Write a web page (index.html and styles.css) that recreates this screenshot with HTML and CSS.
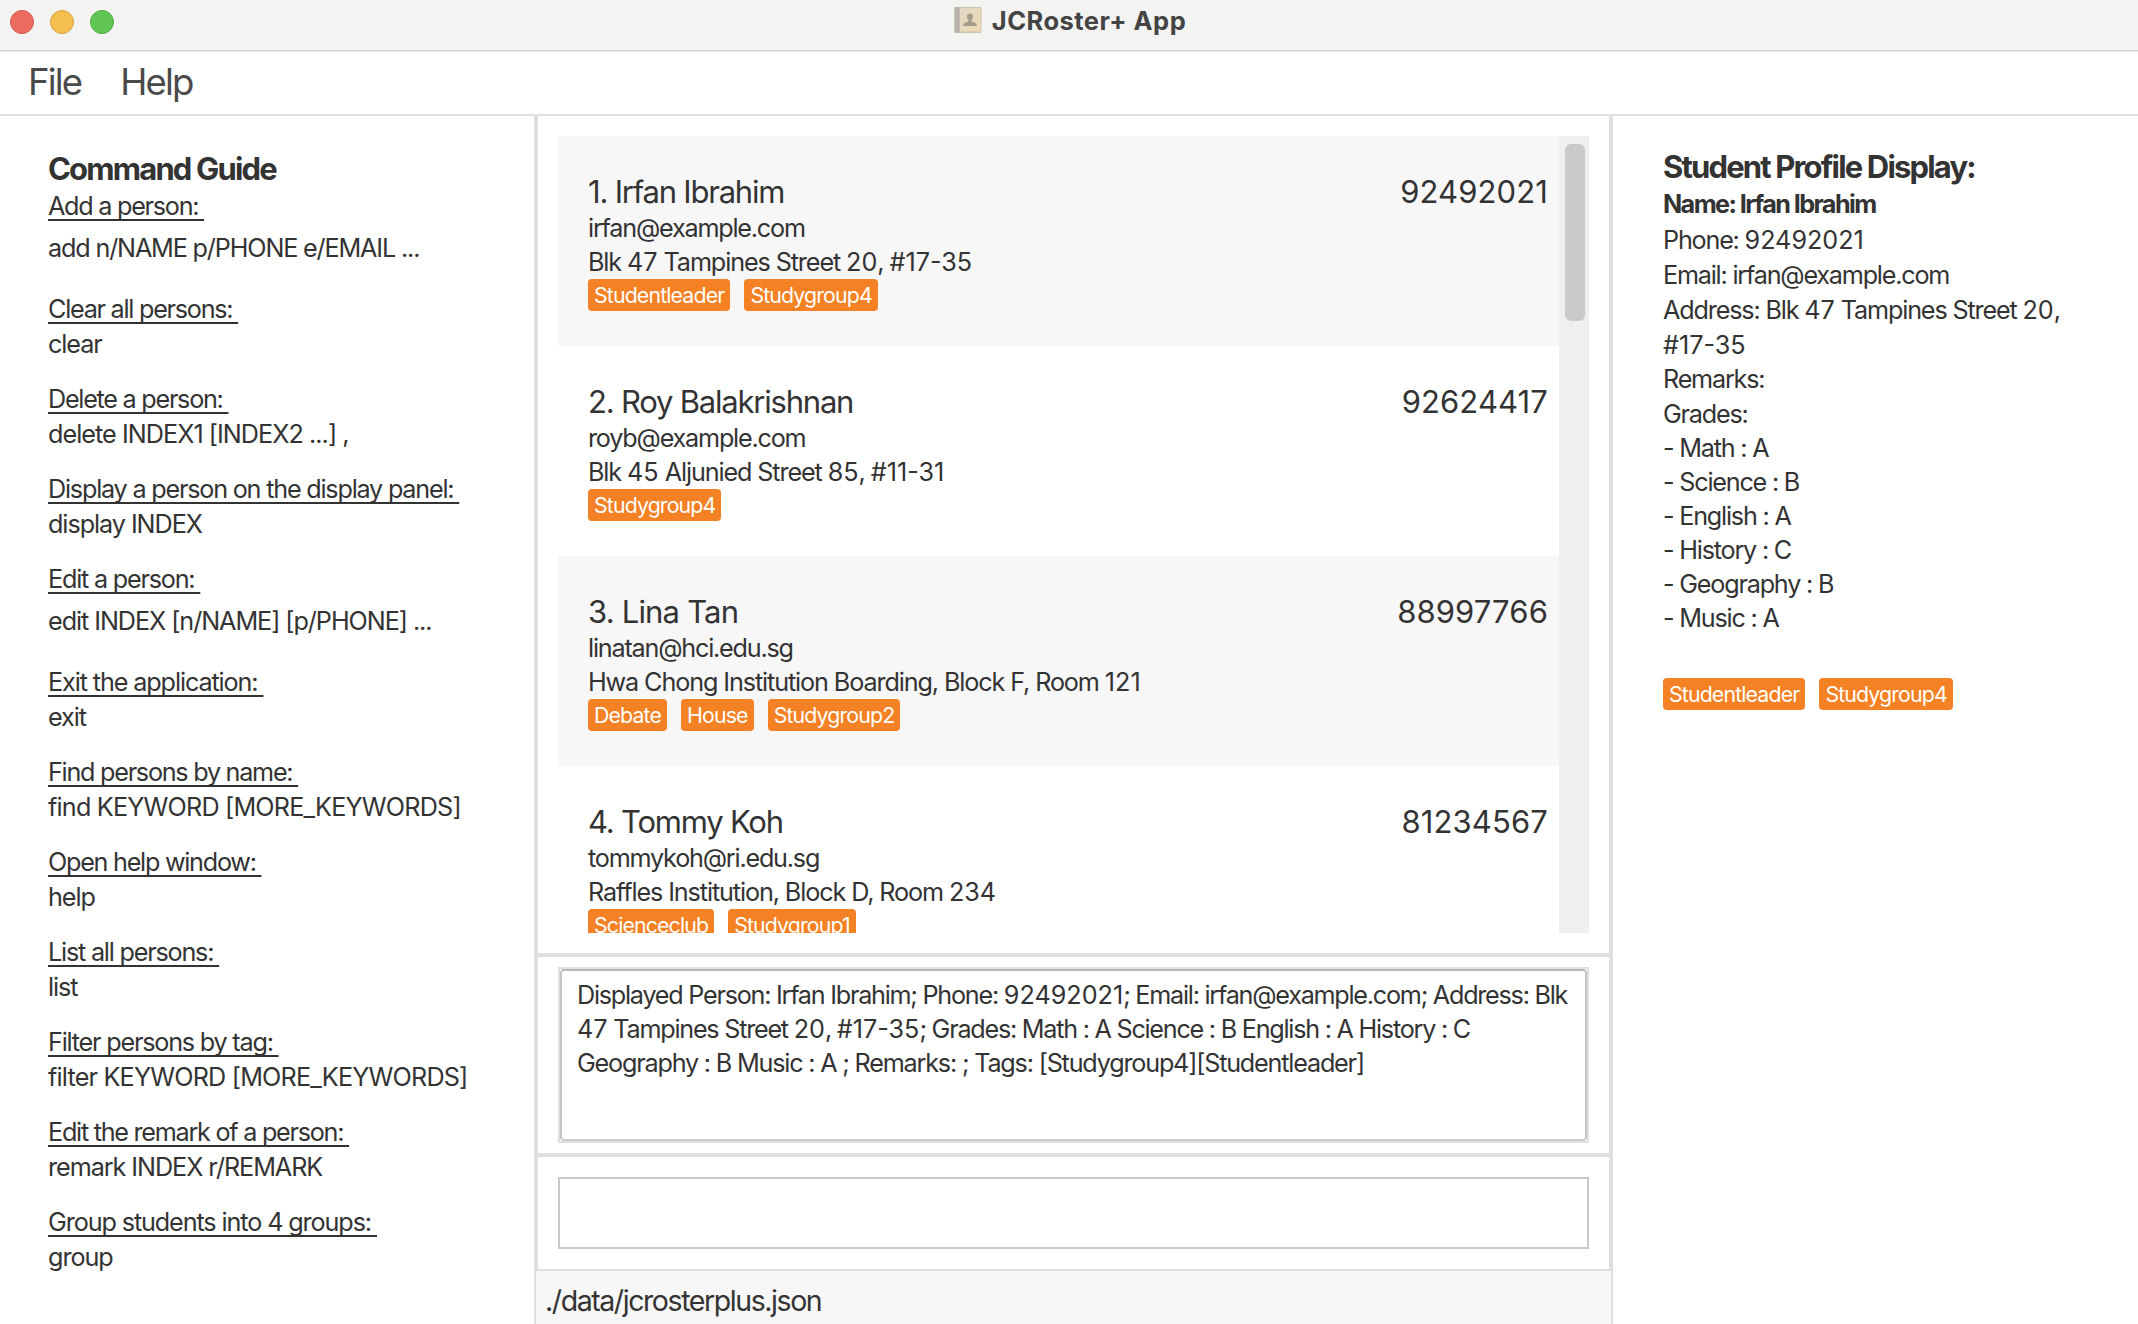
FILE: index.html
```html
<!DOCTYPE html>
<html lang="en">
<head>
<meta charset="utf-8">
<title>JCRoster+ App</title>
<link rel="stylesheet" href="styles.css">
</head>
<body>
<div class="window">
  <header class="titlebar">
    <div class="lights"><i class="light red"></i><i class="light yellow"></i><i class="light green"></i></div>
    <svg class="app-icon" width="28" height="28" viewBox="0 0 28 28">
      <defs><linearGradient id="cover" x1="0" y1="0" x2="1" y2="1"><stop offset="0" stop-color="#e0d6c4"/><stop offset="1" stop-color="#eedcb4"/></linearGradient></defs>
      <rect x="0.5" y="1" width="27" height="26" rx="1" fill="#cdc2ae"/>
      <rect x="0.5" y="1" width="5" height="25.5" rx="1" fill="#b9b2ac"/>
      <rect x="6" y="2" width="20.5" height="23.5" fill="url(#cover)"/>
      <circle cx="16" cy="10.6" r="3.1" fill="#a59c90"/>
      <path d="M14.4 12h3.200v3.200c1 1.200 5 1.200 5.300 3.900v.9H9.100v-.9c.3-2.700 4.300-2.700 5.300-3.900z" fill="#a59c90"/>
    </svg>
    <h1 class="app-title">JCRoster+ App</h1>
  </header>
  <nav class="menubar"><span>File</span><span>Help</span></nav>
  <main class="panes">
    <section class="guide">
      <h2>Command Guide</h2>
      <dl>
        <div class="roomy"><dt>Add a person:&nbsp;</dt><dd>add n/NAME p/PHONE e/EMAIL ...</dd></div>
        <div><dt>Clear all persons:&nbsp;</dt><dd>clear</dd></div>
        <div><dt>Delete a person:&nbsp;</dt><dd class="index">delete INDEX1 [INDEX2 ...] ,</dd></div>
        <div><dt class="long">Display a person on the display panel:&nbsp;</dt><dd>display INDEX</dd></div>
        <div class="roomy"><dt class="long">Edit a person:&nbsp;</dt><dd class="wide">edit INDEX [n/NAME] [p/PHONE] ...</dd></div>
        <div><dt class="wide">Exit the application:&nbsp;</dt><dd>exit</dd></div>
        <div><dt>Find persons by name:&nbsp;</dt><dd class="caps">find KEYWORD [MORE_KEYWORDS]</dd></div>
        <div><dt>Open help window:&nbsp;</dt><dd>help</dd></div>
        <div><dt class="long">List all persons:&nbsp;</dt><dd>list</dd></div>
        <div><dt class="long">Filter persons by tag:&nbsp;</dt><dd class="caps">filter KEYWORD [MORE_KEYWORDS]</dd></div>
        <div><dt>Edit the remark of a person:&nbsp;</dt><dd>remark INDEX r/REMARK</dd></div>
        <div><dt class="wide">Group students into 4 groups:&nbsp;</dt><dd>group</dd></div>
      </dl>
    </section>

    <section class="center">
      <div class="list-pane">
        <div class="list">
          <div class="cells">
            <article class="cell">
              <div class="cell-head"><h3>1. Irfan Ibrahim</h3><span class="phone">92492021</span></div>
              <p>irfan@example.com</p>
              <p class="address">Blk <b>47</b> Tampines Street <b>20</b>, <b>#17-35</b></p>
              <div class="tags"><span>Studentleader</span><span>Studygroup4</span></div>
            </article>
            <article class="cell">
              <div class="cell-head"><h3>2. Roy Balakrishnan</h3><span class="phone">92624417</span></div>
              <p>royb@example.com</p>
              <p class="address">Blk <b>45</b> Aljunied Street <b>85</b>, <b>#11-31</b></p>
              <div class="tags"><span>Studygroup4</span></div>
            </article>
            <article class="cell">
              <div class="cell-head"><h3 class="short">3. Lina Tan</h3><span class="phone">88997766</span></div>
              <p>linatan@hci.edu.sg</p>
              <p class="address">Hwa Chong Institution Boarding, Block F, Room <b>121</b></p>
              <div class="tags"><span>Debate</span><span>House</span><span>Studygroup2</span></div>
            </article>
            <article class="cell">
              <div class="cell-head"><h3>4. Tommy Koh</h3><span class="phone">81234567</span></div>
              <p>tommykoh@ri.edu.sg</p>
              <p class="address">Raffles Institution, Block D, Room <b>234</b></p>
              <div class="tags"><span>Scienceclub</span><span>Studygroup1</span></div>
            </article>
          </div>
          <div class="scrollbar"><div class="thumb"></div></div>
        </div>
      </div>
      <div class="result-pane">
        <div class="result"><div class="result-text">Displayed Person: Irfan Ibrahim; Phone: <b>92492021</b>; Email: irfan@example.com; Address: Blk<br><b>47</b> Tampines Street <b>20</b>, <b>#17-35</b>; Grades: Math : A Science : B English : A History : C<br><span class="last-line">Geography : B Music : A ; Remarks: ; Tags: [Studygroup4][Studentleader]</span></div></div>
      </div>
      <div class="command-pane"><div class="command-box"></div></div>
      <footer class="status">./data/jcrosterplus.json</footer>
    </section>

    <section class="profile">
      <h2>Student Profile Display:</h2>
      <p class="name">Name: Irfan Ibrahim</p>
      <p>Phone: <b>92492021</b></p>
      <p>Email: irfan@example.com</p>
      <p class="address">Address: Blk <b>47</b> Tampines Street <b>20</b>,<br><b>#17-35</b></p>
      <p>Remarks:</p>
      <p>Grades:</p>
      <ul>
        <li>- Math : A</li>
        <li>- Science : B</li>
        <li>- English : A</li>
        <li>- History : C</li>
        <li>- Geography : B</li>
        <li>- Music : A</li>
      </ul>
      <div class="tags"><span>Studentleader</span><span>Studygroup4</span></div>
    </section>
  </main>
</div>
</body>
</html>
```
FILE: styles.css
```css
* { box-sizing: border-box; margin: 0; padding: 0; }

body {
  background: #fff;
  color: #333;
  font: 25.2px/34px Inter, "Liberation Sans", sans-serif;
  letter-spacing: -0.048em;
  white-space: nowrap;
}

/* figures keep their natural width */
b { font-weight: 400; letter-spacing: 0; }

.window { display: flex; flex-direction: column; width: 2138px; height: 1324px; overflow: hidden; }

/* title bar */
.titlebar {
  position: relative;
  display: flex;
  justify-content: center;
  gap: 10px;
  height: 52px;
  padding: 6px 0 0 2px;
  background: #f3f3f1;
  border-bottom: 1px solid #ebebeb;
  box-shadow: inset 0 -1px #d5d6d6;
}
.lights { position: absolute; left: 10px; top: 10px; display: flex; gap: 16px; }
.light { width: 24px; height: 24px; border-radius: 50%; border: 1px solid; }
.red { background: #ed6a5e; border-color: #d5564c; }
.yellow { background: #f5bf4f; border-color: #d9a23d; }
.green { background: #61c554; border-color: #50ac42; }
.app-title { color: #444; font-size: 25.5px; font-weight: 700; line-height: 30px; letter-spacing: 0.018em; }

/* menu bar */
.menubar {
  display: flex;
  gap: 39px;
  height: 64px;
  padding-left: 28px;
  border-bottom: 2px solid #dfdfdf;
  color: #4a4a4a;
  font-size: 36.5px;
  line-height: 60px;
  letter-spacing: -0.05em;
}

.panes { flex: 1; display: grid; grid-template-columns: 534px 1079px 1fr; min-height: 0; }

h2 { font-size: 31px; font-weight: 700; line-height: 39px; letter-spacing: -0.059em; }

/* command guide */
.guide { padding: 33px 0 0 48px; }
.guide dl { padding-top: 1px; }
.guide dl > div { height: 90px; line-height: 35px; }
.guide dl > .roomy { height: 103px; }
dt {
  letter-spacing: -0.05em;
  text-decoration: underline;
  text-decoration-thickness: 1.5px;
  text-underline-offset: 4px;
  text-decoration-skip-ink: none;
}
dd { letter-spacing: -0.042em; }
.roomy dd { padding-top: 7px; letter-spacing: -0.046em; }
.long { letter-spacing: -0.048em; }
.wide, .roomy .wide { letter-spacing: -0.042em; }
dt.wide { letter-spacing: -0.044em; }
.index { letter-spacing: -0.038em; }
.caps { letter-spacing: -0.032em; }

/* center column */
.center {
  display: flex;
  flex-direction: column;
  border: solid #dfdfdf;
  border-width: 0 4px;
}
.list-pane { height: 841px; padding: 20px 20px 20px; border-bottom: 4px solid #dfdfdf; }
.list { display: flex; height: 797px; overflow: hidden; }
.cells { flex: 1; }
.cell { height: 210px; padding: 36px 11px 0 30px; }
.cell:nth-child(odd) { background: #f7f7f7; }
.cell-head { display: flex; justify-content: space-between; font-size: 31px; line-height: 39px; }
.cell-head h3 { font-size: inherit; font-weight: 400; letter-spacing: -0.039em; }
.cell-head .short { letter-spacing: -0.026em; }
.cell .address { letter-spacing: -0.044em; }
.phone { letter-spacing: 0.004em; }
.scrollbar { width: 30px; padding: 8px 4px 0 6px; background: #efefef; }
.thumb { height: 177px; border-radius: 6px; background: #cacaca; }

.tags { display: flex; gap: 14px; }
.tags span {
  height: 32px;
  padding: 0 6px;
  border-radius: 4px;
  background: #f48123;
  color: #fff;
  font-size: 21.3px;
  line-height: 32px;
  letter-spacing: -0.04em;
}

.result-pane { height: 200px; padding: 10px 20px; border-bottom: 4px solid #dfdfdf; }
.result { height: 176px; border: 2px solid #dfdfdf; }
.result-text {
  height: 172px;
  padding: 7px 15px;
  border: 2px solid #c4c4c4;
  border-top-color: #b8b8b8;
  border-bottom-color: #cbcbcb;
  border-radius: 4px;
  letter-spacing: -0.0495em;
}
.last-line { letter-spacing: -0.0475em; }
.command-pane { height: 114px; padding: 20px; border-bottom: 2px solid #dfdfdf; }
.command-box { height: 72px; border: 2px solid #c9c9c9; }
.status {
  flex: 1;
  margin: 0 -2px;
  padding-left: 9px;
  background: #f7f7f7;
  font-size: 28.5px;
  line-height: 60px;
  letter-spacing: -0.05em;
}

/* student profile */
.profile { padding: 31px 0 0 50px; line-height: 35px; }
.profile .name { margin-bottom: 1px; font-weight: 700; line-height: 36px; letter-spacing: -0.063em; }
.profile .address { line-height: 34.5px; letter-spacing: -0.046em; }
.profile ul { list-style: none; line-height: 34px; margin: -1px 0 43px; }
```
